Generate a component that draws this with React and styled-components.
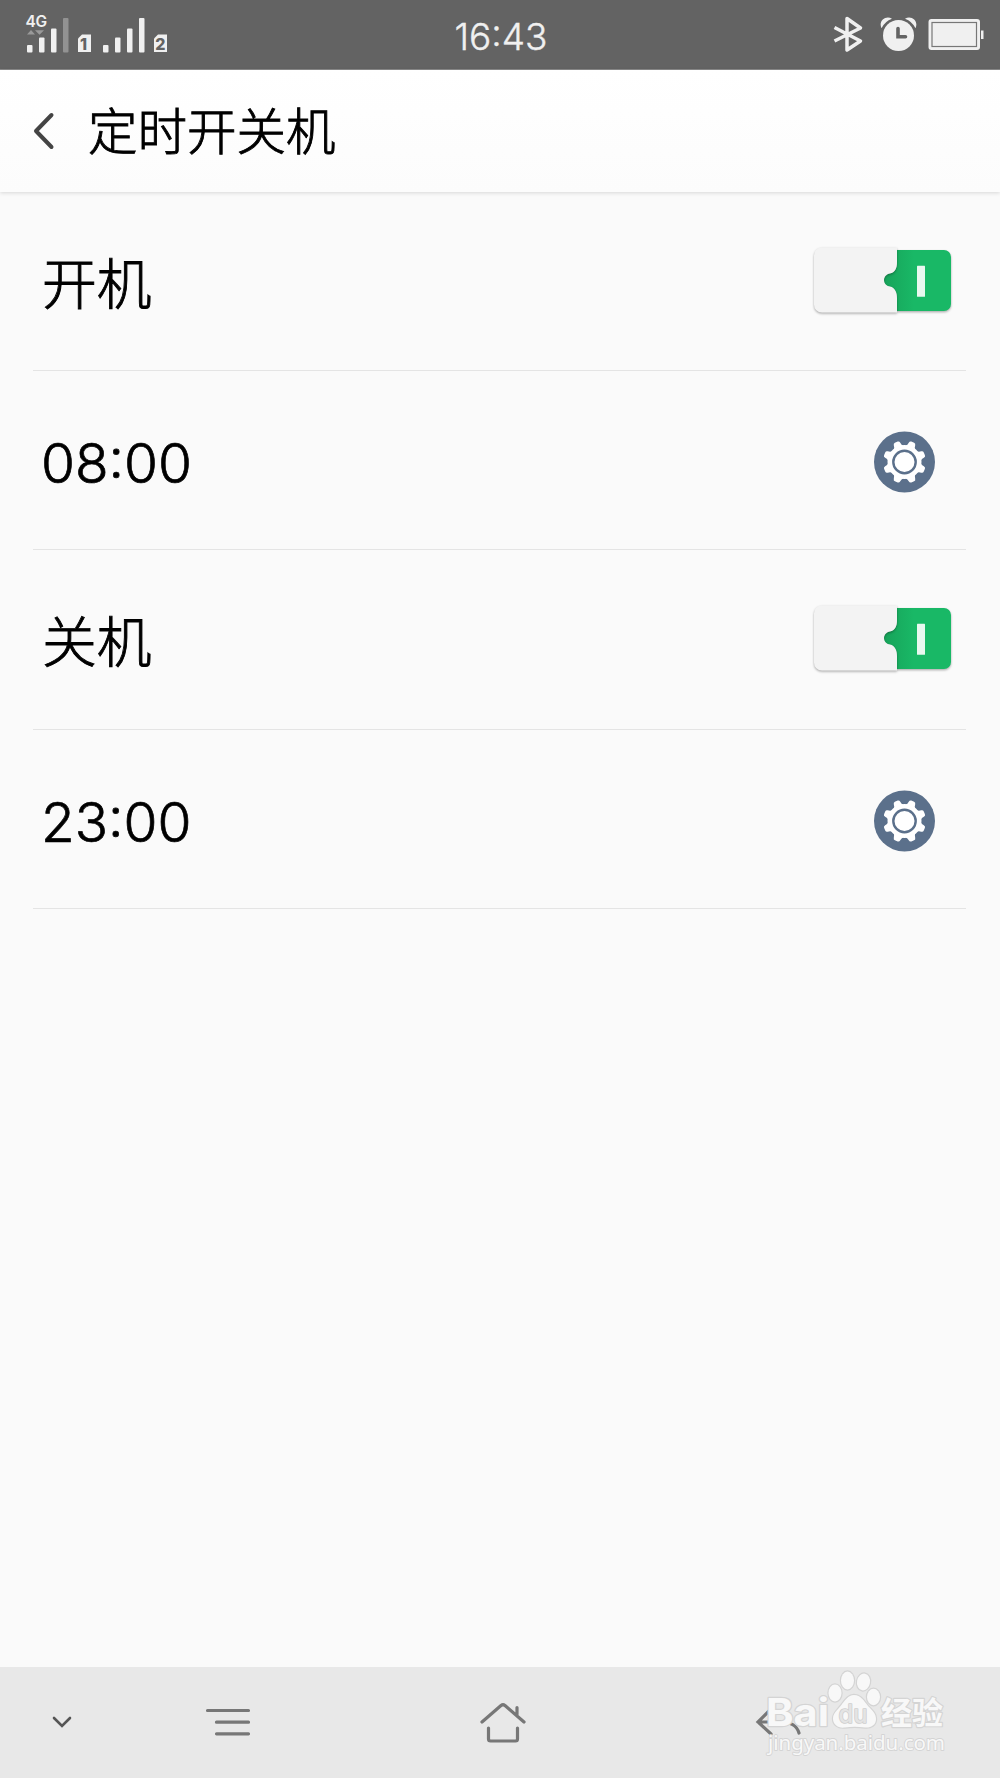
import React, { useState } from 'react';
import styled, { createGlobalStyle } from 'styled-components';

const GlobalStyle = createGlobalStyle`
  * {
    box-sizing: border-box;
  }

  body {
    margin: 0;
    background: #fafafa;
    font-family: Inter, 'Noto Sans CJK SC', sans-serif;
  }
`;

const Screen = styled.div`
  position: relative;
  display: flex;
  flex-direction: column;
  width: 1000px;
  height: 1778px;
  overflow: hidden;
  background: #fafafa;
`;

// Status bar
const StatusBar = styled.div`
  display: grid;
  grid-template-columns: 1fr auto 1fr;
  align-items: center;
  height: 70px;
  flex: none;
  padding: 0 16px 0 25px;
  background: #636363;
  border-bottom: 1px solid #8a8a8a;
`;

const StatusTime = styled.span`
  padding: 4px 0 0 0;
  margin-right: 7px;
  color: #f0f0f0;
  font-size: 37px;
  font-weight: 300;
  line-height: 44px;
  letter-spacing: 0;
  font-feature-settings: 'case';
  -webkit-text-stroke: 0.4px #f0f0f0;
`;

const StatusIcons = styled.div`
  display: flex;
  align-items: center;
  justify-content: flex-end;
`;

// Title bar
const Header = styled.header`
  position: relative;
  display: flex;
  align-items: center;
  height: 122px;
  flex: none;
  padding: 0 33px;
  background: linear-gradient(#ffffff, #fcfcfc);
  box-shadow: 0 1px 4px rgba(0, 0, 0, 0.14);
`;

const BackButton = styled.button`
  display: flex;
  padding: 0;
  margin: 0 33px 1px 0;
  border: 0;
  background: none;
`;

const Title = styled.h1`
  margin: 0 0 4px;
  color: #000;
  font-family: 'Noto Sans CJK SC', sans-serif;
  font-size: 49.5px;
  font-weight: 300;
  line-height: 70px;
  -webkit-text-stroke: 0.9px #000;
`;

// Settings list
const List = styled.main`
  flex: 1;
  padding: 0 34px 0 33px;
`;

const Row = styled.div`
  display: flex;
  align-items: center;
  justify-content: space-between;
  height: 179.5px;
  padding: 0 ${(props) => (props.$wide ? 13 : 30)}px 0 9px;
  border-bottom: 1px solid #e4e4e4;

  &:first-child {
    height: 178.5px;
  }
`;

const Label = styled.span`
  margin-bottom: 2px;
  color: #000;
  font-family: 'Noto Sans CJK SC', sans-serif;
  font-size: 54.8px;
  font-weight: 300;
  line-height: 80px;
  -webkit-text-stroke: 0.9px #000;
`;

const Time = styled.span`
  padding-top: 7px;
  margin-left: -1px;
  color: #000;
  font-size: 55px;
  font-weight: 300;
  line-height: 66px;
  letter-spacing: 0;
  font-feature-settings: 'case';
  -webkit-text-stroke: 0.7px #000;
`;

const ToggleButton = styled.button`
  display: flex;
  padding: 0;
  border: 0;
  background: none;
`;

const RoundButton = styled.button`
  display: flex;
  padding: 0;
  margin-top: 4px;
  border: 0;
  background: none;
`;

// Bottom navigation
const NavBar = styled.nav`
  display: grid;
  grid-template-columns: 123px 210px 340px 210px;
  height: 111px;
  flex: none;
  background: #e8e8e8;
`;

const NavButton = styled.button`
  display: flex;
  align-items: center;
  justify-content: center;
  padding: 0;
  border: 0;
  background: none;
`;

const Watermark = styled.svg`
  position: absolute;
  right: 45px;
  bottom: 14px;
`;

const SignalIcons = () => (
  <svg width="145" height="44" viewBox="25 11.5 145 44" fill="#f0f0f0">
    <text x="25.5" y="25.5" fontFamily="Inter, sans-serif" fontSize="15.5" fontWeight="600" textLength="21.5">
      4G
    </text>
    <path d="M27 33l4-4.5 4 4.5zM35 28.7h9l-4.5 4.5z" fill="#999" />
    <rect x="27" y="43.5" width="5.5" height="7.5" rx="1" />
    <rect x="39" y="36" width="5.5" height="15" rx="1" />
    <rect x="51" y="27" width="5.5" height="24" rx="1" />
    <rect x="63" y="16.5" width="5.5" height="34.5" rx="1" fill="#929292" />
    <path d="M82 33h9v17.5H78V37z" />
    <text x="80" y="48" fontFamily="Inter, sans-serif" fontSize="16" fontWeight="800" fill="#636363">
      1
    </text>
    <rect x="103" y="43.5" width="5.5" height="7.5" rx="1" />
    <rect x="115" y="36" width="5.5" height="15" rx="1" />
    <rect x="127" y="27" width="5.5" height="24" rx="1" />
    <rect x="139" y="16.5" width="5.5" height="34.5" rx="1" />
    <path d="M158 33h9v17.5h-13V37z" />
    <text x="155.2" y="48" fontFamily="Inter, sans-serif" fontSize="16" fontWeight="800" fill="#636363">
      2
    </text>
  </svg>
);

const DeviceIcons = () => (
  <svg width="152" height="40" viewBox="832 15 152 40" fill="#f0f0f0">
    <path
      d="M834.5 27.5l26 13.5-13.5 9V18.5l13.5 9.5-26 13"
      fill="none"
      stroke="#f0f0f0"
      strokeWidth="3.5"
      strokeLinejoin="round"
    />
    <circle cx="898.5" cy="35.5" r="15.5" />
    <path d="M881.5 28.2a19 19 0 0 1 10.5-9.5c-6-4-14 2-10.5 9.5zM915.5 28.2a19 19 0 0 0-10.5-9.5c6-4 14 2 10.5 9.5z" />
    <path d="M898 28.5v8.3h7.5" fill="none" stroke="#636363" strokeWidth="3.6" strokeLinecap="round" />
    <rect x="928.5" y="19" width="51.5" height="31" rx="3" />
    <rect x="932" y="22.5" width="44.5" height="24" fill="#f0f0f0" stroke="#777" strokeWidth="1.2" />
    <path d="M981 30.5h2.5v8.5H981z" />
  </svg>
);

const ToggleIcon = () => (
  <svg width="141" height="72" viewBox="812 244 141 72">
    <defs>
      <filter id="lift" x="-10%" y="-10%" width="120%" height="130%" colorInterpolationFilters="sRGB">
        <feDropShadow dx="0" dy="1.2" stdDeviation="1.2" floodOpacity="0.32" />
      </filter>
      <linearGradient id="green" x1="0" x2="1">
        <stop offset="0" stopColor="#17a35a" />
        <stop offset="0.45" stopColor="#19b866" />
      </linearGradient>
    </defs>
    <path
      d="M897 249h47a7 7 0 0 1 7 7v47a7 7 0 0 1-7 7h-47v-12c0-7-2-11-8-12.5-6-1-8-9 0-13 6-1 8-5 8-11.5z"
      fill="url(#green)"
      filter="url(#lift)"
    />
    <path
      d="M822 246.5h75v14c0 7-2 11-7 12-8 1-8 12 0 13 5 1 7 6 7 12v14h-75a8 8 0 0 1-8-8v-49a8 8 0 0 1 8-8z"
      fill="#f3f3f3"
      filter="url(#lift)"
    />
    <rect x="917" y="264.7" width="8" height="31" rx="0.5" fill="#e8f8ef" />
  </svg>
);

// Eight rounded teeth around a ring
const GearIcon = () => (
  <svg width="62" height="62" viewBox="-30.5 -31 62 62">
    <circle r="30.5" fill="#5b708b" />
    <g fill="#fff">
      <circle r="17" />
      {[22.5, 67.5, 112.5, 157.5, 202.5, 247.5, 292.5, 337.5].map((angle) => (
        <path
          key={angle}
          d="M-5.2 -15.5Q-3.7 -17 -3.5 -19.5Q-3.2 -21.5 -1.5 -21.5H1.5Q3.2 -21.5 3.5 -19.5Q3.7 -17 5.2 -15.5z"
          transform={`rotate(${angle})`}
        />
      ))}
    </g>
    <circle r="11.2" fill="#fff" stroke="#5b708b" strokeWidth="2.4" />
  </svg>
);

const BaiduMark = () => (
  <Watermark
    width="190"
    height="98"
    viewBox="765 1666 190 98"
    fill="#f8f8f8"
    stroke="#d4d4d4"
    strokeWidth="2.4"
    paintOrder="stroke"
    strokeLinejoin="round"
  >
    <text x="766" y="1726" fontFamily="Inter, sans-serif" fontSize="38" fontWeight="700" textLength="63" lengthAdjust="spacingAndGlyphs">
      Bai
    </text>
    <ellipse cx="835" cy="1693" rx="6.5" ry="8.5" />
    <ellipse cx="847.5" cy="1680.5" rx="6.5" ry="9" />
    <ellipse cx="863.5" cy="1682" rx="6.5" ry="8.5" transform="rotate(10 863.5 1682)" />
    <ellipse cx="873.5" cy="1697" rx="6.5" ry="8.3" />
    <path d="M854 1695c7 0 10 6 14 11 5 5 8 8 8 13 0 6-5 9-11 8.5-7-1-14-1-20 0-7 1-12-3-12-9 0-5 4-8 8-13 4-5 7-10.5 13-10.5z" />
    <text x="838.5" y="1722.5" fontFamily="Inter, sans-serif" fontSize="25" fontWeight="500" fill="#e4e4e4" stroke="#cfcfcf" strokeWidth="1.6" textLength="29" lengthAdjust="spacingAndGlyphs">
      du
    </text>
    <text x="881" y="1723.5" fontFamily="'Noto Sans CJK SC', sans-serif" fontSize="31" fontWeight="700" textLength="62">
      经验
    </text>
    <text x="768" y="1750" fontFamily="'Noto Sans', sans-serif" fontSize="20.5" strokeWidth="1.8" textLength="177">
      jingyan.baidu.com
    </text>
  </Watermark>
);

const App = () => {
  const [powerOn, setPowerOn] = useState(true);
  const [powerOff, setPowerOff] = useState(true);

  return (
    <>
      <GlobalStyle />
      <Screen>
        <StatusBar>
          <SignalIcons />
          <StatusTime>16:43</StatusTime>
          <StatusIcons>
            <DeviceIcons />
          </StatusIcons>
        </StatusBar>

        <Header>
          <BackButton aria-label="返回">
            <svg width="22" height="38" viewBox="0 0 22 38" fill="none" stroke="#444" strokeWidth="4" strokeLinecap="round" strokeLinejoin="round">
              <path d="M18.5 3L3 19l15.5 16" />
            </svg>
          </BackButton>
          <Title>定时开关机</Title>
        </Header>

        <List>
          <Row $wide>
            <Label>开机</Label>
            <ToggleButton aria-pressed={powerOn} onClick={() => setPowerOn(!powerOn)}>
              <ToggleIcon />
            </ToggleButton>
          </Row>
          <Row>
            <Time>08:00</Time>
            <RoundButton>
              <GearIcon />
            </RoundButton>
          </Row>
          <Row $wide>
            <Label>关机</Label>
            <ToggleButton aria-pressed={powerOff} onClick={() => setPowerOff(!powerOff)}>
              <ToggleIcon />
            </ToggleButton>
          </Row>
          <Row>
            <Time>23:00</Time>
            <RoundButton>
              <GearIcon />
            </RoundButton>
          </Row>
        </List>

        <NavBar>
          <NavButton>
            <svg width="20" height="14" viewBox="0 0 20 14" fill="none" stroke="#555" strokeWidth="2.6" strokeLinecap="round">
              <path d="M2 2l8 8 8-8" />
            </svg>
          </NavButton>
          <NavButton>
            <svg width="46" height="32" viewBox="0 0 46 32" fill="none" stroke="#777" strokeWidth="3.2" strokeLinecap="round">
              <path d="M2.5 3.5h41M11.5 15.2h32M11.5 26.8h32" />
            </svg>
          </NavButton>
          <NavButton>
            <svg width="46" height="44" viewBox="0 0.5 46 44" fill="none" stroke="#777" strokeWidth="3.2" strokeLinecap="round" strokeLinejoin="round">
              <path d="M2 21.5L21 5q2-1.5 4 0l19 16.5M37 14V7M8.5 27.5v11q0 2 2 2h25q2 0 2-2v-11" />
            </svg>
          </NavButton>
          <NavButton>
            <svg width="46" height="32" viewBox="0 0 46 32" fill="none" stroke="#777" strokeWidth="3.2" strokeLinecap="round">
              <path d="M14 4L3 15l13 12M3 15h23c11 0 16 4 18 11" />
            </svg>
          </NavButton>
        </NavBar>
        <BaiduMark />
      </Screen>
    </>
  );
};

export default App;
